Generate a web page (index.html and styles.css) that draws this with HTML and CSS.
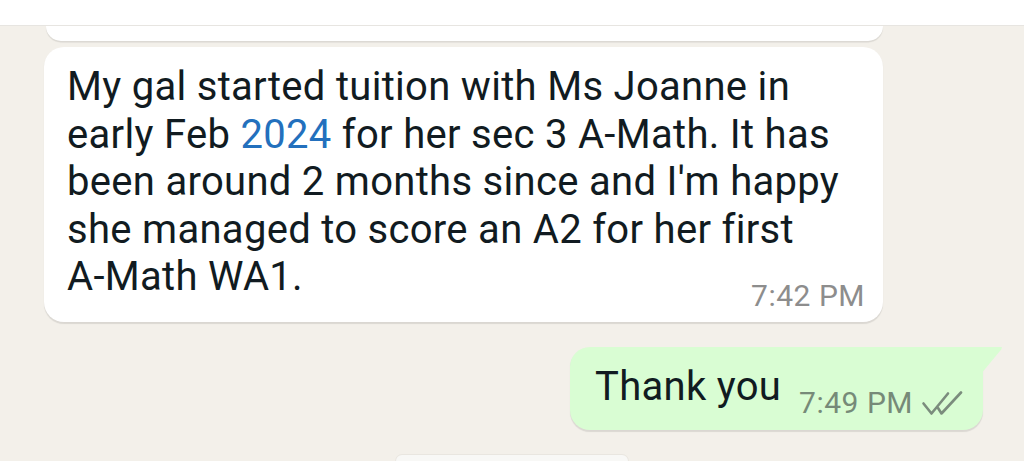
FILE: index.html
```html
<!DOCTYPE html>
<html lang="en">
<head>
<meta charset="utf-8">
<title>Chat</title>
<link rel="stylesheet" href="styles.css">
</head>
<body>
<div class="chat">
  <div class="topbar"></div>
  <div class="row row-in">
    <div class="prev-bubble"></div>
  </div>
  <div class="row row-in">
    <div class="bubble bubble-in">
      <p class="text">My gal started tuition with Ms Joanne in<br>early Feb <span class="link">2024</span> for her sec 3 A-Math. It has<br>been around 2 months since and I'm happy<br>she managed to score an A2 for her first<br>A-Math WA1.</p>
      <div class="meta meta-in">7:42 PM</div>
    </div>
  </div>
  <div class="row row-out">
    <div class="bubble bubble-out">
      <p class="text">Thank you</p>
      <div class="meta meta-out">
        <span>7:49 PM</span>
        <svg class="ticks" width="42" height="26" viewBox="0 0 42 26" aria-hidden="true">
          <path d="M2.5 12.5 L10.5 22.5 L27 2.5" fill="none" stroke="currentColor" stroke-width="2.6" stroke-linecap="round" stroke-linejoin="round"/>
          <path d="M17 17 L20.5 22.5 L40 1.5" fill="none" stroke="currentColor" stroke-width="2.6" stroke-linecap="round" stroke-linejoin="round"/>
        </svg>
      </div>
    </div>
  </div>
  <div class="row row-center">
    <div class="date-chip"></div>
  </div>
</div>
</body>
</html>
```

FILE: styles.css
```css
* { box-sizing: border-box; }

html, body {
  margin: 0;
  padding: 0;
}

body {
  width: 1024px;
  height: 461px;
  overflow: hidden;
  background: #f3f0ea;
  font-family: Roboto, "Noto Sans", "Liberation Sans", sans-serif;
  color: #111b21;
}

.chat {
  display: flex;
  flex-direction: column;
}

.topbar {
  height: 26px;
  background: #ffffff;
  border-bottom: 1px solid #e7e5e1;
}

.row {
  display: flex;
}

.row-in {
  padding-left: 44px;
}

.row-out {
  justify-content: flex-end;
  padding-right: 41px;
  margin-top: 25px;
}

.row-center {
  justify-content: center;
  margin-top: 25px;
}

.prev-bubble {
  width: 837px;
  height: 15px;
  margin-left: 2px;
  background: #ffffff;
  border-radius: 0 0 18px 18px;
  box-shadow: 0 1.5px 1px rgba(0, 0, 0, 0.10);
}

.bubble {
  position: relative;
  border-radius: 20px;
  box-shadow: 0 1.5px 1px rgba(0, 0, 0, 0.10);
}

.bubble-in {
  margin-top: 6px;
  width: 839px;
  background: #ffffff;
  padding: 16px 18px 9px 23px;
  display: flex;
  flex-direction: column;
}

.text {
  margin: 0;
  font-size: 40px;
  line-height: 47.5px;
  letter-spacing: 0.3px;
  white-space: nowrap;
}

.link {
  color: #2370bd;
}

.meta {
  font-size: 30px;
  line-height: 34px;
  letter-spacing: 0.5px;
  white-space: nowrap;
}

.meta-in {
  align-self: flex-end;
  margin-top: -22px;
  color: #8d8d8d;
}

.bubble-out {
  width: 413px;
  background: #d9fdd3;
  border-top-right-radius: 0;
  padding: 16px 20px 10px 25px;
  display: flex;
  align-items: flex-start;
  justify-content: space-between;
}

.bubble-out::after {
  content: "";
  position: absolute;
  left: 100%;
  top: 0;
  width: 19px;
  height: 25px;
  background: #d9fdd3;
  clip-path: polygon(0 0, 88% 0, 100% 3%, 96% 12%, 0 100%);
}

.meta-out {
  margin-top: 23px;
  color: #768a78;
  display: flex;
  align-items: center;
  gap: 8px;
}

.ticks {
  display: block;
  color: #7b8c7d;
  margin-top: 2px;
}

.date-chip {
  width: 232px;
  height: 6px;
  background: #f8f8f6;
  border-radius: 14px 14px 0 0;
  box-shadow: 0 0 0 1px rgba(0, 0, 0, 0.04);
}
```
